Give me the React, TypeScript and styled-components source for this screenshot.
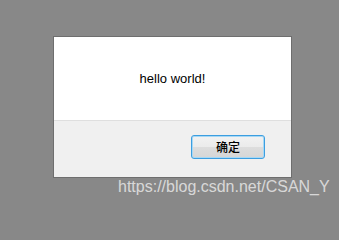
import React from 'react';
import styled, { createGlobalStyle } from 'styled-components';

const GlobalStyle = createGlobalStyle`
  html, body {
    margin: 0;
    padding: 0;
    background: #888888;
  }
`;

const Screen = styled.div`
  position: relative;
  width: 339px;
  height: 205px;
  padding: 36px 0 0 53px;
  box-sizing: border-box;
  overflow: hidden;
`;

const Dialog = styled.div`
  width: 239px;
  height: 142px;
  box-sizing: border-box;
  border: 1px solid #6e6e6e;
  background: #ffffff;
  display: flex;
  flex-direction: column;
`;

const Body = styled.div`
  height: 83px;
  display: flex;
  align-items: center;
  justify-content: center;
  font-family: 'Liberation Sans', 'Noto Sans', sans-serif;
  font-size: 13px;
  color: #000;
`;

const Footer = styled.div`
  flex: 1;
  background: #f0f0f0;
  border-top: 1px solid #dfdfdf;
  display: flex;
  justify-content: flex-end;
  align-items: flex-start;
  padding: 14px 26px 0 0;
`;

const Button = styled.button`
  width: 74px;
  height: 24px;
  box-sizing: border-box;
  border: 1px solid #3c9ee0;
  border-radius: 3px;
  box-shadow: inset 0 0 0 1px #a7d8f5;
  background: linear-gradient(#f2f2f2 0%, #ebebeb 50%, #dddddd 51%, #d6d6d6 100%);
  font-family: 'Noto Sans CJK SC', 'Liberation Sans', sans-serif;
  font-size: 12px;
  font-weight: 500;
  color: #000;
  padding: 0;
  line-height: 22px;
`;

const Watermark = styled.div`
  position: absolute;
  left: 118px;
  top: 178px;
  font-family: 'Liberation Sans', Arial, sans-serif;
  font-size: 16px;
  color: rgba(238, 238, 238, 0.8);
  white-space: nowrap;
`;

const App: React.FC = () => {
  return (
    <>
      <GlobalStyle />
      <Screen>
        <Dialog>
          <Body>hello world!</Body>
          <Footer>
            <Button>确定</Button>
          </Footer>
        </Dialog>
        <Watermark>https://blog.csdn.net/CSAN_Y</Watermark>
      </Screen>
    </>
  );
};

export default App;
